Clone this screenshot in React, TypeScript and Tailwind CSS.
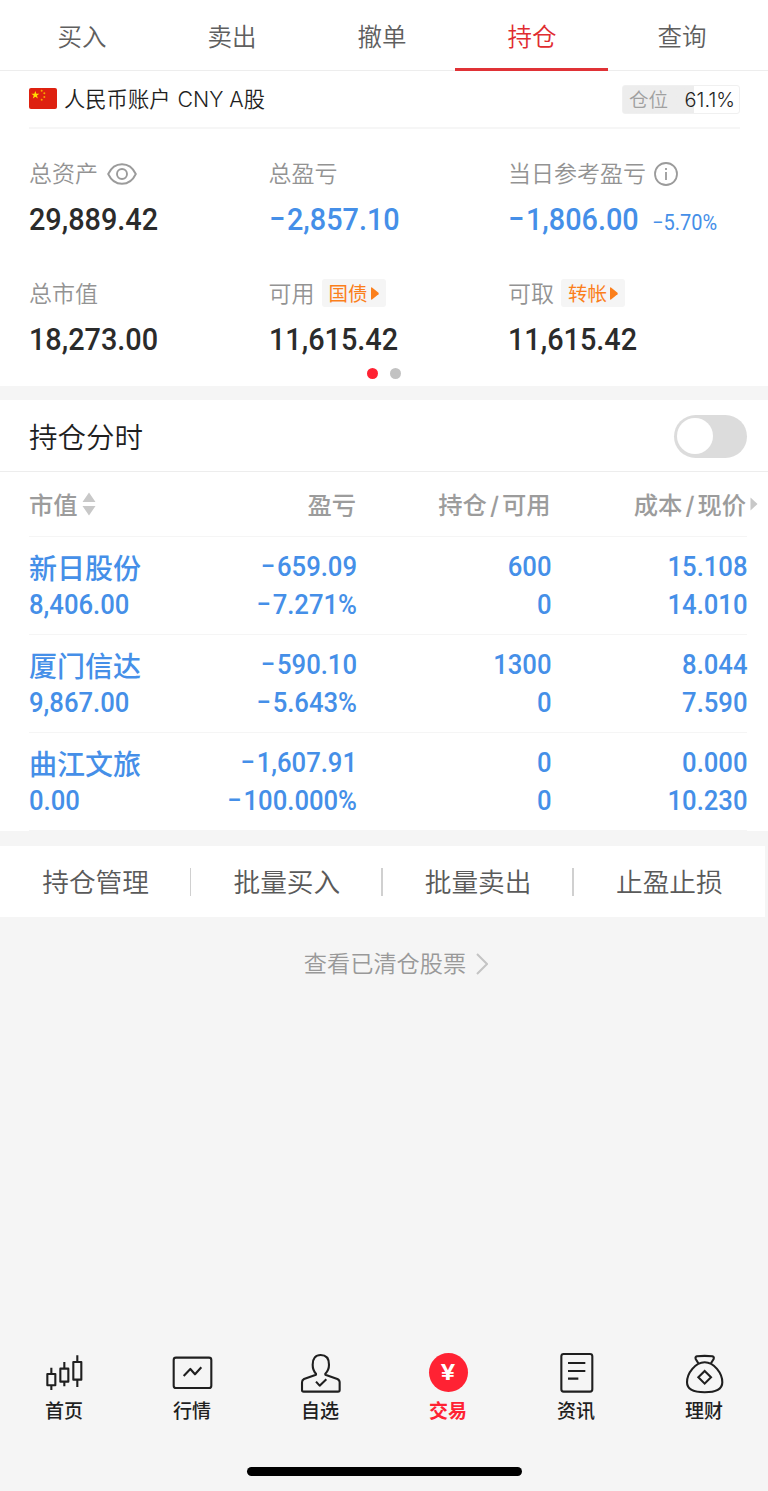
/** @file Brokerage holdings screen: account summary, positions table and tab bar. */

import type { ReactNode } from "react";

interface Position {
  name: string;
  value: string;
  profit: string;
  rate: string;
  held: string;
  available: string;
  cost: string;
  price: string;
}

const TABS = ["买入", "卖出", "撤单", "持仓", "查询"];
const ACTIVE_TAB = "持仓";

const POSITIONS: Position[] = [
  {
    name: "新日股份",
    value: "8,406.00",
    profit: "−659.09",
    rate: "−7.271%",
    held: "600",
    available: "0",
    cost: "15.108",
    price: "14.010",
  },
  {
    name: "厦门信达",
    value: "9,867.00",
    profit: "−590.10",
    rate: "−5.643%",
    held: "1300",
    available: "0",
    cost: "8.044",
    price: "7.590",
  },
  {
    name: "曲江文旅",
    value: "0.00",
    profit: "−1,607.91",
    rate: "−100.000%",
    held: "0",
    available: "0",
    cost: "0.000",
    price: "10.230",
  },
];

const ACTIONS = ["持仓管理", "批量买入", "批量卖出", "止盈止损"];

function TopTabs(): JSX.Element {
  return (
    <header className="relative h-[71px] border-b border-[#ededed] bg-white">
      <nav className="flex h-[70px] pl-[7px] pr-[11px]">
        {TABS.map((tab) => (
          <button
            key={tab}
            type="button"
            className={`w-[150px] pt-[4px] text-[24.5px] font-[350] leading-none ${
              tab === ACTIVE_TAB ? "text-[#e02c30]" : "text-[#5f5f5f]"
            }`}
          >
            {tab}
          </button>
        ))}
      </nav>
      <div className="absolute -bottom-px left-[454.5px] h-[3.5px] w-[153.5px] bg-[#e03236]" />
    </header>
  );
}

function Flag(): JSX.Element {
  return (
    <svg viewBox="0 0 84 63" className="h-[21px] w-[28px] rounded-[2px]" aria-hidden>
      <rect width="84" height="63" fill="#de2110" />
      <path
        d="M19 9l3 8.500h9l-7.200 5.300 2.700 8.700-7.500-5.200-7.500 5.200 2.700-8.700-7.200-5.300h9z"
        fill="#ffde00"
      />
      <circle cx="38" cy="8" r="3" fill="#f5a800" />
      <circle cx="46" cy="16" r="3" fill="#f5a800" />
      <circle cx="46" cy="27" r="3" fill="#f5a800" />
      <circle cx="38" cy="35" r="3" fill="#f5a800" />
    </svg>
  );
}

function AccountRow(): JSX.Element {
  return (
    <div className="ml-[29px] mr-7 flex h-[58px] items-center justify-between border-b-2 border-[#f6f6f6]">
      <div className="flex items-center">
        <Flag />
        <span className="ml-[7px] whitespace-pre pt-[2px] text-[21.3px] font-[350] leading-none text-[#1f1f1f]">
          人民币账户 <span className="ml-px text-[21.3px]">CNY A</span>股
        </span>
      </div>
      <div className="mt-px flex h-[29px] w-[118px] items-center justify-between rounded-[3px] border border-[#f0f0f0] bg-linear-to-r from-[#ededed] from-61% to-white to-61% pl-[6px] pr-1 text-[19.5px] leading-none">
        <span className="pt-[3px] font-[350] text-[#a0a0a0]">仓位</span>
        <span className="text-[20px] font-[350] text-[#1f1f1f]">61.1%</span>
      </div>
    </div>
  );
}

function EyeIcon(): JSX.Element {
  return (
    <svg viewBox="0 0 30 22" className="ml-[9px] h-[22px] w-[30px]" fill="none" stroke="#9b9b9b" strokeWidth="1.9">
      <path d="M1.2 11C4 5 9 1.2 15 1.2S26 5 28.8 11C26 17 21 20.800 15 20.800S4 17 1.200 11z" />
      <circle cx="15" cy="11" r="5" />
    </svg>
  );
}

function InfoIcon(): JSX.Element {
  return (
    <svg viewBox="0 0 24 24" className="ml-2 size-6" fill="none" stroke="#9b9b9b" strokeWidth="1.8">
      <circle cx="12" cy="12" r="11" />
      <path d="M12 10v8M12 6v2" />
    </svg>
  );
}

function Pill({ children }: { children: ReactNode }): JSX.Element {
  return (
    <span className="-mt-[2px] ml-[7px] flex h-[28px] w-16 items-center rounded-[3px] bg-[#f5f5f5] pl-[7px] text-[19.5px] font-normal leading-none text-[#fb7f1c]">
      <span className="pt-[3px]">{children}</span>
      <svg viewBox="0 0 8 13" className="ml-[3px] h-[13px] w-2 shrink-0" fill="#fb7f1c">
        <path d="M1 0.500Q0 0 0 1V12Q0 13 1 12.500L7.500 7.200Q8 6.500 7.500 5.800z" />
      </svg>
    </span>
  );
}

/** Splits off a leading minus so it keeps a little air before the digits. */
function Signed({ value }: { value: string }): JSX.Element {
  return value.startsWith("−") ? (
    <>
      <span className="mr-[2px]">−</span>
      {value.slice(1)}
    </>
  ) : (
    <>{value}</>
  );
}

interface MetricProps {
  label: string;
  value: string;
  tone?: string;
  extra?: ReactNode;
  note?: string;
}

function Metric({ label, value, tone = "text-[#2b2b2b]", extra, note }: MetricProps): JSX.Element {
  return (
    <div className="w-[239.5px] shrink-0">
      <div className="flex h-7 items-center text-[23px] font-[350] leading-none text-[#939393]">
        <span>{label}</span>
        {extra}
      </div>
      <div className={`mt-[13px] flex h-[39px] items-baseline whitespace-nowrap font-['Roboto'] font-medium ${tone}`}>
        <span className="origin-left scale-x-[.9] text-[32px] leading-[37px]">
          <Signed value={value} />
        </span>
        {note ? <span className="-ml-px origin-left scale-x-[.93] text-[21.5px] font-normal">{note}</span> : null}
      </div>
    </div>
  );
}

function Summary(): JSX.Element {
  return (
    <section className="h-[257px] overflow-hidden pl-[29px] pt-[31px]">
      <div className="flex">
        <Metric label="总资产" value="29,889.42" extra={<EyeIcon />} />
        <Metric label="总盈亏" value="−2,857.10" tone="text-[#458fe8]" />
        <Metric
          label="当日参考盈亏"
          value="−1,806.00"
          tone="text-[#458fe8]"
          extra={<InfoIcon />}
          note="−5.70%"
        />
      </div>
      <div className="mt-10 flex">
        <Metric label="总市值" value="18,273.00" />
        <Metric label="可用" value="11,615.42" extra={<Pill>国债</Pill>} />
        <Metric label="可取" value="11,615.42" extra={<Pill>转帐</Pill>} />
      </div>
      <div className="-ml-[29px] mt-[8px] flex justify-center gap-3">
        <span className="size-[11px] rounded-full bg-[#ff2233]" />
        <span className="size-[11px] rounded-full bg-[#c2c2c2]" />
      </div>
    </section>
  );
}

function Num({ value }: { value: string }): JSX.Element {
  return (
    <span className="block origin-right scale-x-[.9] whitespace-nowrap font-['Roboto'] font-medium">
      <Signed value={value} />
    </span>
  );
}

const GRID = "grid grid-cols-[134px_194px_194.5px_195.5px] text-right";

function PositionsTable(): JSX.Element {
  return (
    <section className="bg-white pl-[29px] pr-[21px]">
      <div className={`${GRID} h-[65px] items-center border-b border-[#f5f5f5] pt-[3px] text-[24.3px] font-medium leading-none text-[#9c9c9c]`}>
        <span className="flex items-center">
          市值
          <svg viewBox="0 0 14 24" className="-mt-[2px] ml-1 h-6 w-[14px]" fill="#c8c8c8">
            <path d="M7 0.500l6.500 9.500H0.500zM7 23.500l6.500-9.500H0.500z" />
          </svg>
        </span>
        <span className="pr-px">盈亏</span>
        <span className="pr-px">
          持仓<span className="px-[3px]">/</span>可用
        </span>
        <span className="relative pr-px">
          成本<span className="px-[3px]">/</span>现价
          <svg viewBox="0 0 8 14" className="absolute -right-[11px] top-[4px] h-[14px] w-2" fill="#c8c8c8">
            <path d="M0.500 0.500L7.500 7L0.500 13.500z" />
          </svg>
        </span>
      </div>
      {POSITIONS.map((p) => (
        <div
          key={p.name}
          className={`${GRID} h-[98px] border-b border-[#f5f5f5] pt-[10.5px] text-[28.5px] leading-[38px] text-[#458fe8]`}
        >
          <div className="text-left">
            <div className="h-[38px] whitespace-nowrap pt-[2px] text-[28px] font-medium">{p.name}</div>
            <div className="origin-left scale-x-[.9] font-['Roboto'] font-medium">{p.value}</div>
          </div>
          <div>
            <Num value={p.profit} />
            <Num value={p.rate} />
          </div>
          <div>
            <Num value={p.held} />
            <Num value={p.available} />
          </div>
          <div>
            <Num value={p.cost} />
            <Num value={p.price} />
          </div>
        </div>
      ))}
    </section>
  );
}

function ActionBar(): JSX.Element {
  return (
    <div className="mt-[15px] flex h-[71px] w-[765px] items-center bg-white">
      {ACTIONS.map((action, index) => (
        <div key={action} className="relative flex h-7 flex-1 items-center justify-center">
          <button type="button" className="pt-[2px] text-[26.7px] font-[350] leading-none text-[#5a5a5a]">
            {action}
          </button>
          {index < ACTIONS.length - 1 ? (
            <span className="absolute right-0 h-7 w-[1.5px] bg-[#d0d0d0]" />
          ) : null}
        </div>
      ))}
    </div>
  );
}

function NavIcon({ children }: { children: ReactNode }): JSX.Element {
  return (
    <svg
      viewBox="0 0 120 124"
      className="h-[41.3px] w-10 overflow-visible"
      fill="none"
      stroke="#1f1f1f"
      strokeWidth="6.3"
      strokeLinejoin="round"
    >
      {children}
    </svg>
  );
}

const NAV_ITEMS: { label: string; icon: ReactNode }[] = [
  {
    label: "首页",
    icon: (
      <NavIcon>
        <rect x="10" y="66" width="24" height="34" />
        <rect x="49" y="50" width="24" height="39" />
        <rect x="88" y="30" width="24" height="53" />
        <path d="M22 47V66M22 100V114M61 30V50M61 89V103M100 10V30M100 83V105" />
      </NavIcon>
    ),
  },
  {
    label: "行情",
    icon: (
      <NavIcon>
        <rect x="5" y="17" width="113" height="91" rx="7" />
        <path d="M35 72L55 51L69 67L88 46" />
      </NavIcon>
    ),
  },
  {
    label: "自选",
    icon: (
      <NavIcon>
        <path d="M48 65C41 58 38 50 38 38C38 19 47 9 62 9C77 9 87 19 87 38C87 50 83 58 76 65V68L112 81Q119 84 119 91V114Q119 119 114 119H11Q6 119 6 114V91Q6 84 12 81L48 68Z" />
        <path d="M48 89L59 101L79 82" />
      </NavIcon>
    ),
  },
  {
    label: "交易",
    icon: (
      <span className="flex h-[41.3px] w-10 items-start justify-center pt-px">
        <span className="flex size-[39px] items-center justify-center rounded-full bg-[#ff2233] font-['Roboto'] text-[22.5px] font-semibold leading-none text-white">
          <span className="scale-x-[1.2]">¥</span>
        </span>
      </span>
    ),
  },
  {
    label: "资讯",
    icon: (
      <NavIcon>
        <rect x="16" y="6" width="93" height="113" rx="7" />
        <path d="M36 33H88M36 57H88M36 80H67" />
      </NavIcon>
    ),
  },
  {
    label: "理财",
    icon: (
      <NavIcon>
        <path d="M43 34L35 21Q33 15 39 13Q62 10 85 13Q91 15 89 21L81 34" />
        <path d="M62 31C34 31 9 64 9 91C9 112 27 121 62 121C97 121 115 112 115 91C115 64 90 31 62 31Z" />
        <path d="M62 57L81 76L62 95L43 76Z" strokeLinejoin="miter" />
      </NavIcon>
    ),
  },
];

function BottomNav(): JSX.Element {
  return (
    <footer className="mt-auto">
      <nav className="flex h-[115px]">
        {NAV_ITEMS.map(({ label, icon }) => (
          <button key={label} type="button" className="flex flex-1 flex-col items-center">
            {icon}
            <span
              className={`mt-[9px] text-[19px] leading-none ${
                label === "交易" ? "font-bold text-[#ff2233]" : "font-medium text-[#1f1f1f]"
              }`}
            >
              {label}
            </span>
          </button>
        ))}
      </nav>
      <div className="mx-auto mb-[15px] h-[9px] w-[275px] rounded-full bg-black" />
    </footer>
  );
}

export default function App(): JSX.Element {
  return (
    <div className="flex h-[1491px] w-[768px] flex-col overflow-hidden bg-[#f5f5f5] font-['Inter','Noto_Sans_CJK_SC',sans-serif]">
      <div className="bg-white">
        <TopTabs />
        <AccountRow />
        <Summary />
      </div>
      <div className="mt-[14px] flex h-[72px] items-center justify-between border-b border-[#ededed] bg-white pl-[29px] pr-[21px]">
        <h2 className="pt-[5px] text-[28.5px] font-[350] leading-none text-[#1f1f1f]">持仓分时</h2>
        <button
          type="button"
          role="switch"
          aria-checked={false}
          aria-label="持仓分时"
          className="mt-px h-[43px] w-[73.5px] rounded-full bg-[#dcdcdc] pl-[3.5px]"
        >
          <span className="block size-9 rounded-full bg-white" />
        </button>
      </div>
      <PositionsTable />
      <ActionBar />
      <button
        type="button"
        className="mt-[35px] flex items-center justify-center pl-6 text-[23.200px] font-[350] leading-6 text-[#999]"
      >
        查看已清仓股票
        <svg viewBox="0 0 12 22" className="ml-[10px] h-[22px] w-3" fill="none" stroke="#c4c4c4" strokeWidth="2">
          <path d="M1 1L11 11L1 21" />
        </svg>
      </button>
      <BottomNav />
    </div>
  );
}
